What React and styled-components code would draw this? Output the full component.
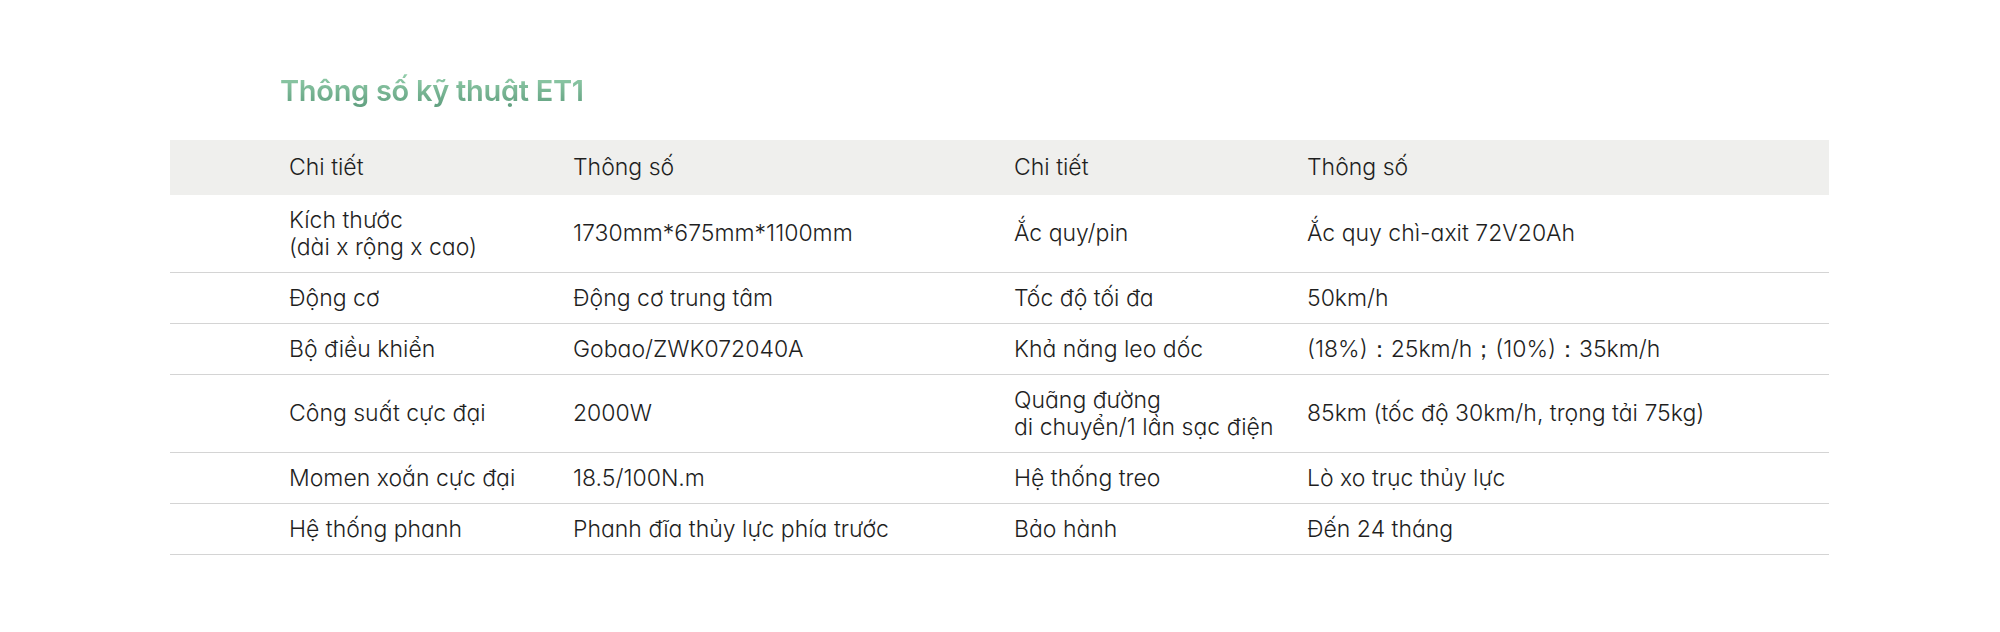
import React from 'react'
import styled, { createGlobalStyle } from 'styled-components'

const Global = createGlobalStyle`
  body {
    margin: 0;
    background: #fff;
    font-family: Inter, "Noto Sans", sans-serif;
    font-feature-settings: "cv11";
  }
`

const Section = styled.section`
  padding: 73px 171px 0 170px;
`

const Title = styled.h2`
  margin: 0 0 31px 110px;
  font-size: 29px;
  font-weight: 600;
  line-height: 36px;
  letter-spacing: -0.3px;
  background: linear-gradient(180deg, #94cfac 0%, #5e9d7d 100%);
  -webkit-background-clip: text;
  background-clip: text;
  color: transparent;
  display: inline-block;
`

const Grid = styled.div`
  display: grid;
  grid-template-columns: 403px 441px 293px 1fr;
`

const Row = styled.div`
  display: contents;
`

const Cell = styled.div`
  padding: ${(p) => (p.$head ? '0' : '11.5px 0')};
  padding-left: ${(p) => (p.$first ? '119px' : '0')};
  min-height: ${(p) => (p.$head ? '55px' : '27px')};
  display: flex;
  flex-direction: column;
  justify-content: center;
  background: ${(p) => (p.$head ? '#efefed' : 'transparent')};
  border-bottom: ${(p) => (p.$head ? 'none' : '1px solid #d4d4d4')};
  font-size: 23px;
  font-weight: 300;
  line-height: 27px;
  color: #1f1f1f;
  white-space: nowrap;
`

const head = ['Chi tiết', 'Thông số', 'Chi tiết', 'Thông số']

const rows = [
  [['Kích thước', '(dài x rộng x cao)'], '1730mm*675mm*1100mm', 'Ắc quy/pin', 'Ắc quy chì-axit 72V20Ah'],
  ['Động cơ', 'Động cơ trung tâm', 'Tốc độ tối đa', '50km/h'],
  ['Bộ điều khiển', 'Gobao/ZWK072040A', 'Khả năng leo dốc', '(18%)：25km/h；(10%)：35km/h'],
  ['Công suất cực đại', '2000W', ['Quãng đường', 'di chuyển/1 lần sạc điện'], '85km (tốc độ 30km/h, trọng tải 75kg)'],
  ['Momen xoắn cực đại', '18.5/100N.m', 'Hệ thống treo', 'Lò xo trục thủy lực'],
  ['Hệ thống phanh', 'Phanh đĩa thủy lực phía trước', 'Bảo hành', 'Đến 24 tháng'],
]

const Text = ({ value }) =>
  Array.isArray(value) ? value.map((line) => <span key={line}>{line}</span>) : <span>{value}</span>

export default function App() {
  return (
    <>
      <Global />
      <Section>
        <Title>Thông số kỹ thuật ET1</Title>
        <Grid>
          <Row>
            {head.map((h, i) => (
              <Cell key={i} $head $first={i === 0}>{h}</Cell>
            ))}
          </Row>
          {rows.map((r, ri) => (
            <Row key={ri}>
              {r.map((c, ci) => (
                <Cell key={ci} $first={ci === 0}>
                  <Text value={c} />
                </Cell>
              ))}
            </Row>
          ))}
        </Grid>
      </Section>
    </>
  )
}
